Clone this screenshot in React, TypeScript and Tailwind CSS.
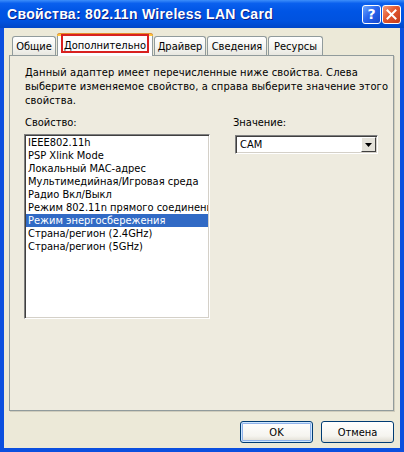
import React from "react";

const items = [
  "IEEE802.11h",
  "PSP Xlink Mode",
  "Локальный MAC-адрес",
  "Мультимедийная/Игровая среда",
  "Радио Вкл/Выкл",
  "Режим 802.11n прямого соединени",
  "Режим энергосбережения",
  "Страна/регион (2.4GHz)",
  "Страна/регион (5GHz)",
];

function Tab({ label, w }: { label: string; w: string }) {
  return (
    <div
      className={`${w} h-[19px] flex items-center justify-center rounded-t-[3px] border-t border-x border-[#919B9C] bg-[linear-gradient(to_bottom,#FFFFFF,#F3F3EF_60%,#E8E7E0)] leading-none`}
    >
      {label}
    </div>
  );
}

export default function App() {
  return (
    <div className="w-[404px] h-[452px] flex flex-col overflow-hidden font-['DejaVu_Sans_Condensed','Liberation_Sans',sans-serif] text-[11px] text-black">
      {/* Title bar */}
      <div className="h-[28px] shrink-0 flex items-center pl-[7px] pr-[3px] bg-[linear-gradient(to_bottom,#3D8EFA_0%,#0A60EE_12%,#0055E5_40%,#0052DF_75%,#0046C8_100%)]">
        <span className="text-white font-bold text-[14px] tracking-[0.3px] [text-shadow:1px_1px_0_#0A1E8A] whitespace-nowrap font-['Liberation_Sans',Arial,sans-serif]">
          Свойства: 802.11n Wireless LAN Card
        </span>
        <div className="flex-1" />
        <div className="flex gap-[1px]">
          <div className="w-[19px] h-[19px] rounded-[3px] border border-white bg-[linear-gradient(135deg,#6BA6FF_0%,#2A66EE_45%,#1547CC_100%)] flex items-center justify-center text-white font-bold text-[14px] leading-none font-['DejaVu_Sans',sans-serif]">
            ?
          </div>
          <div className="w-[19px] h-[19px] rounded-[3px] border border-white bg-[linear-gradient(135deg,#F39A7C_0%,#E3572E_45%,#C23A1A_100%)] flex items-center justify-center">
            <svg width="11" height="11" viewBox="0 0 11 11">
              <path d="M1.5 1.5 L9.5 9.5 M9.5 1.5 L1.5 9.5" stroke="white" strokeWidth="2" strokeLinecap="square" />
            </svg>
          </div>
        </div>
      </div>

      {/* Body */}
      <div className="flex-1 flex flex-col bg-[#ECE9D8] border-x-[4px] border-b-[4px] border-[#0B4FDF]">
        {/* Tabs */}
        <div className="mt-[5px] ml-[8px] h-[22px] flex items-end gap-[1px] relative z-10">
          <Tab label="Общие" w="w-[44px]" />
          <div className="relative w-[96px] h-[23px] -mb-[1px] rounded-t-[3px] border-x border-[#919B9C] bg-[#FCFCFE] flex flex-col">
            <div className="h-[3px] rounded-t-[3px] bg-[#FFC83C] border-t border-[#E68B2C] -mx-[1px]" />
            <div className="flex-1 flex items-center justify-center leading-none pb-[2px]">Дополнительно</div>
            <div className="absolute left-[3px] right-[3px] top-[1px] bottom-[3px] border-2 border-[#D8201F]" />
          </div>
          <Tab label="Драйвер" w="w-[52px]" />
          <Tab label="Сведения" w="w-[60px]" />
          <Tab label="Ресурсы" w="w-[55px]" />
        </div>

        {/* Panel */}
        <div className="ml-[5px] w-[385px] h-[356px] border border-[#919B9C] bg-[#EEEBDF] shadow-[1px_1px_0_#D0CDBD] px-[15px] pt-[10px] flex flex-col">
          <p className="leading-[14px] whitespace-nowrap tracking-[0.12px]">
            Данный адаптер имеет перечисленные ниже свойства. Слева
            <br />
            выберите изменяемое свойство, а справа выберите значение этого
            <br />
            свойства.
          </p>
          <div className="mt-[8px] flex">
            <div className="w-[210px] flex flex-col">
              <div className="leading-[14px]">Свойство:</div>
              <div className="mt-[4px] -ml-[1px] w-[186px] h-[185px] bg-white border border-t-[#808080] border-l-[#808080] border-b-white border-r-white shadow-[inset_1px_1px_0_#404040,inset_-1px_-1px_0_#D4D0C8] p-[1px]">
                {items.map((t, i) => (
                  <div
                    key={t}
                    className={`h-[13px] leading-[13px] pl-[2px] whitespace-nowrap overflow-hidden ${
                      i === 6 ? "bg-[#316AC5] text-white" : ""
                    }`}
                  >
                    {t}
                  </div>
                ))}
              </div>
            </div>
            <div className="flex flex-col">
              <div className="leading-[14px]">Значение:</div>
              <div className="mt-[5px] ml-[2px] w-[143px] h-[19px] bg-white border border-t-[#808080] border-l-[#808080] border-b-white border-r-white shadow-[inset_1px_1px_0_#404040,inset_-1px_-1px_0_#D4D0C8] p-[1px] flex items-center">
                <div className="flex-1 pl-[3px] leading-none">CAM</div>
                <div className="w-[15px] h-[15px] bg-[#E4E2DA] border border-t-white border-l-white border-b-[#404040] border-r-[#404040] flex items-center justify-center">
                  <svg width="7" height="4" viewBox="0 0 7 4">
                    <path d="M0 0 H7 L3.5 4 Z" fill="black" />
                  </svg>
                </div>
              </div>
            </div>
          </div>
        </div>

        {/* Buttons */}
        <div className="mt-[10px] pr-[6px] flex justify-end gap-[8px]">
          <div className="w-[73px] h-[22px] rounded-[3px] border border-[#003C74] bg-[linear-gradient(to_bottom,#FFFFFF,#F5F4EF_70%,#DEDAD0)] shadow-[inset_0_0_0_1px_#CEE7FF,inset_0_0_0_2px_#8FB2EA] flex items-center justify-center leading-none">
            OK
          </div>
          <div className="w-[73px] h-[22px] rounded-[3px] border border-[#003C74] bg-[linear-gradient(to_bottom,#FFFFFF,#F5F4EF_70%,#DEDAD0)] flex items-center justify-center leading-none">
            Отмена
          </div>
        </div>
      </div>
    </div>
  );
}
